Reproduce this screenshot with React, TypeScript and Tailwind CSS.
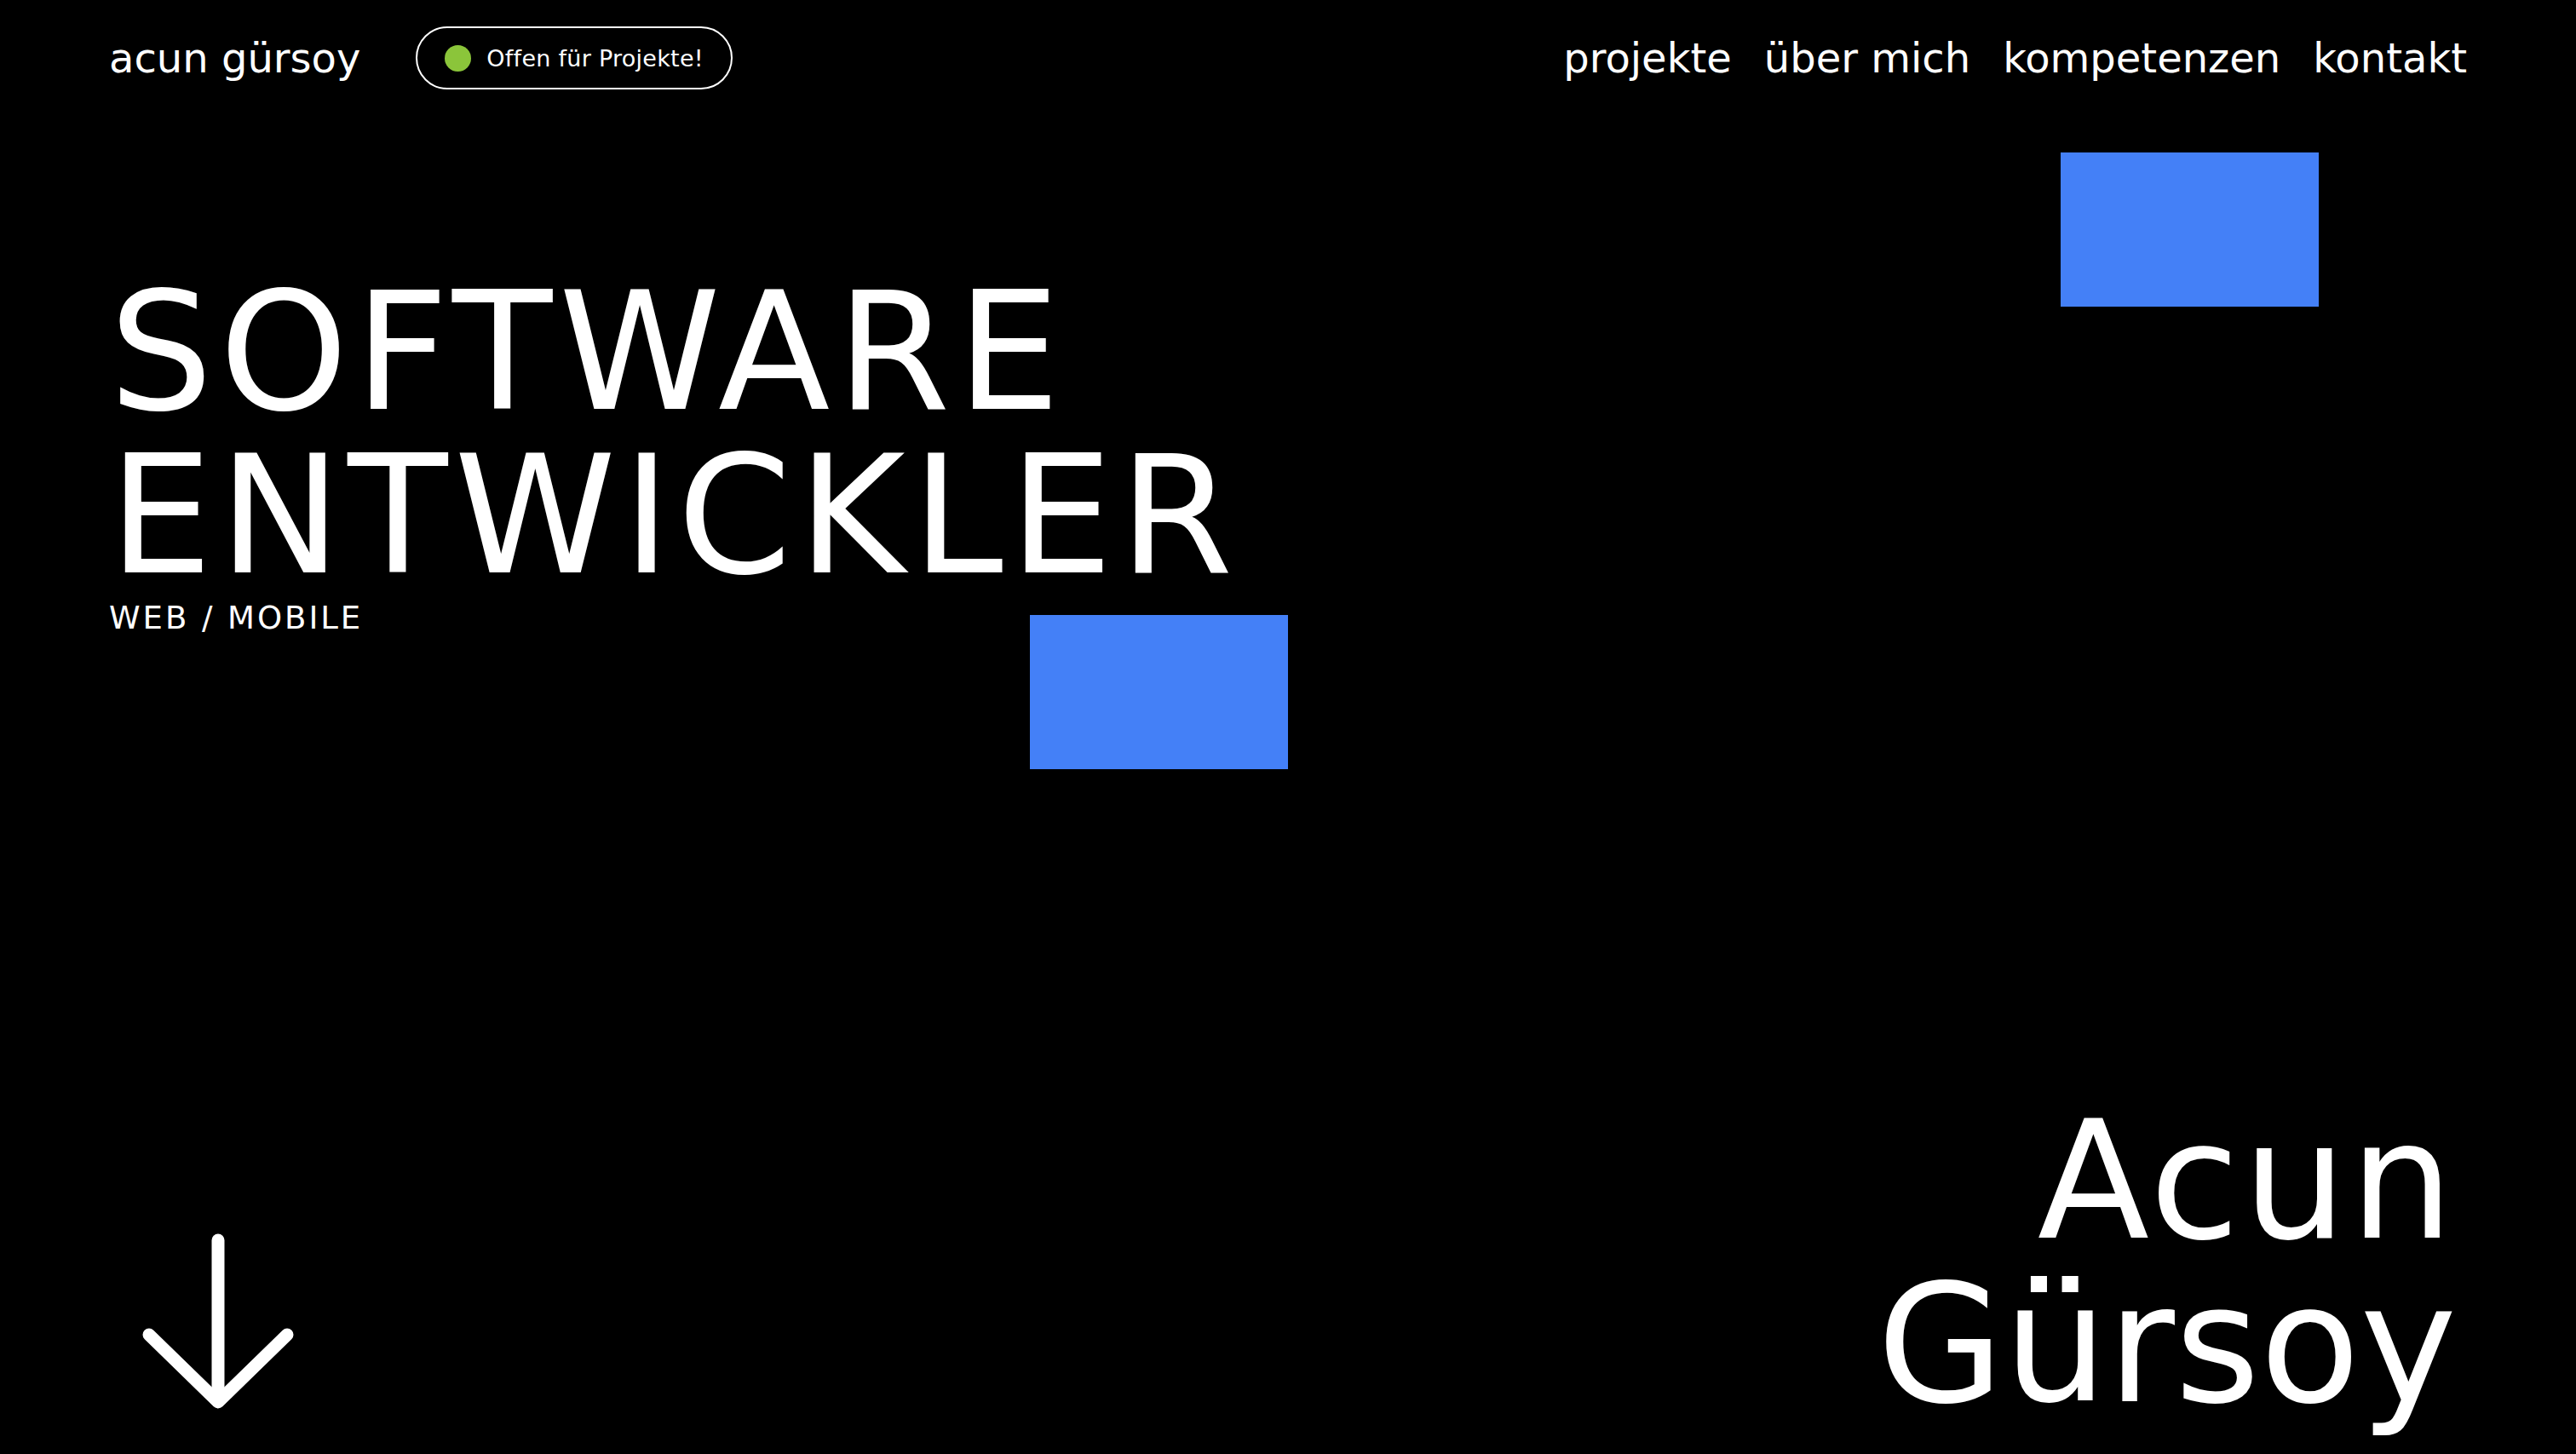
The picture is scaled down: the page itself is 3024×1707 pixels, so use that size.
import React from 'react';

const navLinks = ['projekte', 'über mich', 'kompetenzen', 'kontakt'];

const ArrowDown: React.FC = () => (
  <svg
    viewBox="0 0 190 220"
    className="ml-8 mb-[15px] h-[220px] w-[190px]"
    fill="none"
    stroke="white"
    strokeWidth={15}
    strokeLinecap="round"
    strokeLinejoin="round"
  >
    <path d="M96 16V205" />
    <path d="M15 127L96 206L177 127" />
  </svg>
);

const App: React.FC = () => {
  return (
    <div className="relative flex h-[1707px] w-full flex-col overflow-hidden bg-black px-32 font-['DejaVu_Sans',sans-serif] text-white">
      {/* Header */}
      <header className="flex h-[136px] items-center justify-between">
        <div className="flex items-center gap-[65px]">
          <span className="text-5xl leading-none">acun gürsoy</span>
          <div className="flex h-[74px] items-center gap-[18px] rounded-full border-2 border-white pl-8 pr-8">
            <span className="h-[31px] w-[31px] rounded-full bg-[#8bc53a]" />
            <span className="text-[27px] leading-none tracking-[0.01em]">Offen für Projekte!</span>
          </div>
        </div>
        <nav className="flex items-center gap-[38px]">
          {navLinks.map((link) => (
            <a key={link} href="#" className="text-5xl leading-none">
              {link}
            </a>
          ))}
        </nav>
      </header>

      {/* Hero */}
      <section className="mt-[182px]">
        <h1 className="text-[192px] leading-none tracking-[0.04em]">
          SOFTWARE
          <br />
          ENTWICKLER
        </h1>
        <p className="mt-[5px] text-[37px] leading-none tracking-[0.08em]">WEB / MOBILE</p>
      </section>

      {/* Bottom */}
      <div className="mt-auto flex items-end justify-between pb-8">
        <ArrowDown />
        <h2 className="mr-3 text-right text-[192px] leading-none">
          <span className="tracking-[0.02em]">Acun</span>
          <br />
          Gürsoy
        </h2>
      </div>

      {/* Deko-Rechtecke */}
      <div className="absolute left-[2419px] top-[179px] h-[181px] w-[303px] bg-[#4480f7]" />
      <div className="absolute left-[1209px] top-[722px] h-[181px] w-[303px] bg-[#4480f7]" />
    </div>
  );
};

export default App;
